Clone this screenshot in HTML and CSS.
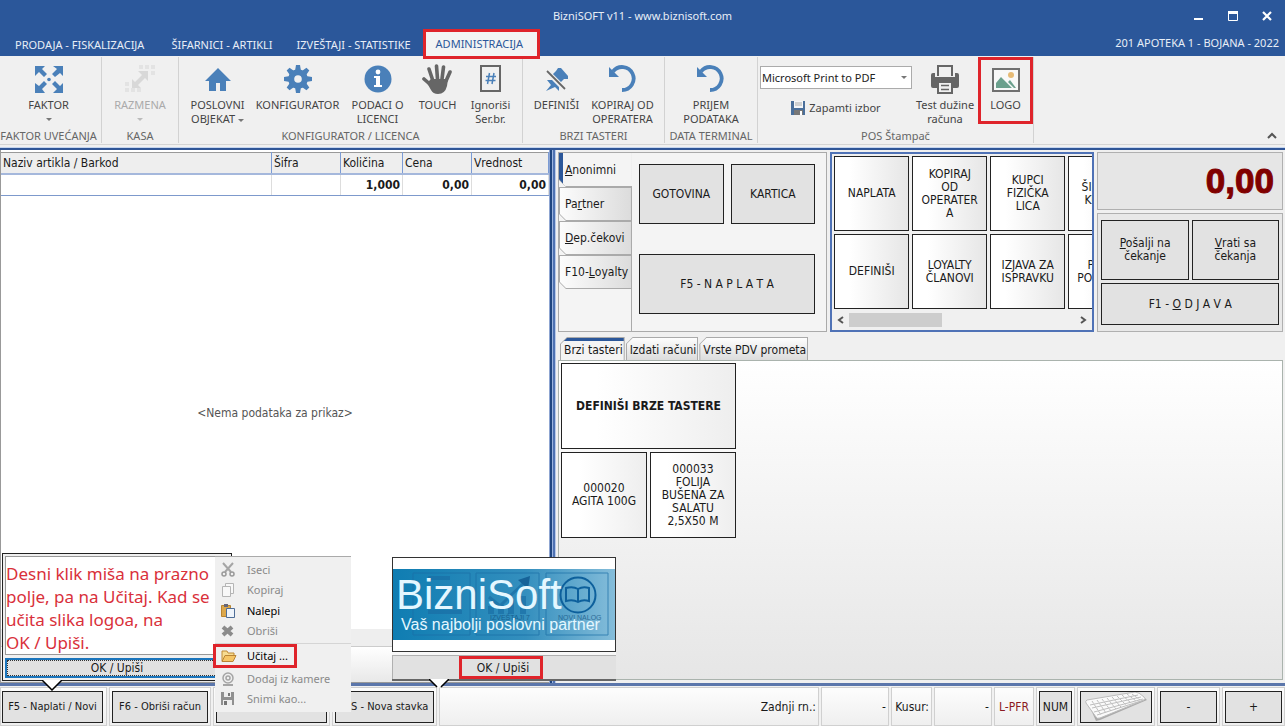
FILE: index.html
```html
<!DOCTYPE html>
<html lang="sr-Latn">
<head>
<meta charset="utf-8">
<title>BizniSOFT v11 - www.biznisoft.com</title>
<link rel="stylesheet" href="styles.css">
</head>
<body>
<svg class="defs" aria-hidden="true">
  <symbol id="undo" viewBox="0 0 28 28"><path d="M4 6.500A11.500 11.500 0 1 1 13 25" fill="none" stroke="#4a80b9" stroke-width="3.800"/><path d="M0 2v10h10z" fill="#4a80b9"/></symbol>
</svg>
<header class="titlebar">
  <div class="caption">
    <h1>BizniSOFT v11 - www.biznisoft.com</h1>
    <div class="winbtns">
      <button aria-label="Minimize"><svg width="10" height="10"><path d="M0 8h9" stroke="#fff" stroke-width="2"/></svg></button>
      <button aria-label="Maximize"><svg width="10" height="10"><path d="M.5 0v9.500h9V0" fill="none" stroke="#fff"/><path d="M0 1.500h10" stroke="#fff" stroke-width="3"/></svg></button>
      <button aria-label="Close"><svg width="10" height="10"><path d="M1 1l8 8M9 1l-8 8" stroke="#fff" stroke-width="2.200"/></svg></button>
    </div>
  </div>
  <nav class="menubar">
    <button>PRODAJA - FISKALIZACIJA</button>
    <button>ŠIFARNICI - ARTIKLI</button>
    <button>IZVEŠTAJI - STATISTIKE</button>
    <button class="current">ADMINISTRACIJA</button>
    <span class="user">201 APOTEKA 1 - BOJANA - 2022</span>
  </nav>
</header>

<section class="ribbon">
  <div class="group g-faktor">
    <div class="tools"><button class="tool"><svg width="28" height="28" viewBox="0 0 28 28"><g fill="#4a80b9"><path d="M0 1h10L7 4l5 5-3 3-5-5-4 4zM28 1v10l-3-3-5 4-3-3 5-5-4-3zM0 28V18l4 3 5-5 3 3-5 5 3 4zM28 28H18l4-4-5-5 3-3 5 5 3-3z"/><circle cx="14" cy="14.500" r="1.800"/></g></svg><span>FAKTOR</span><i class="caret"></i></button></div>
    <h2>FAKTOR UVEĆANJA</h2>
  </div>
  <div class="group g-kasa">
    <div class="tools"><button class="tool" disabled><svg width="30" height="28" viewBox="0 0 30 28"><g fill="#d8d8d8"><path d="M23 6v10l-3-3-7 7 3 3H7v-9l3 3 7-7-4-4z"/></g><g fill="#e3e3e3"><path d="M14 0h4v4h-4zM20 0h4v4h-4zM26 0h4v4h-4zM26 6h4v4h-4zM0 17h4v4H0zM0 23h4v4H0zM6 23h4v4H6zM12 23h4v4h-4z"/></g></svg><span>RAZMENA</span><i class="caret"></i></button></div>
    <h2>KASA</h2>
  </div>
  <div class="group g-konf">
    <div class="tools">
      <button class="tool w64"><svg width="28" height="28" viewBox="0 0 28 28"><path d="M14 3L1 16h4v10h7v-8h4v8h6V16h5z" fill="#4a80b9"/></svg><span>POSLOVNI<br>OBJEKAT <i class="caret inline"></i></span></button>
      <button class="tool w88"><svg width="28" height="28" viewBox="-14 -14 28 28"><g fill="#4a80b9"><path id="tooth" d="M-3-8l1-6h4l1 6z"/><use href="#tooth" transform="rotate(45)"/><use href="#tooth" transform="rotate(90)"/><use href="#tooth" transform="rotate(135)"/><use href="#tooth" transform="rotate(180)"/><use href="#tooth" transform="rotate(225)"/><use href="#tooth" transform="rotate(270)"/><use href="#tooth" transform="rotate(315)"/></g><circle r="6.800" fill="none" stroke="#4a80b9" stroke-width="6"/></svg><span>KONFIGURATOR</span></button>
      <button class="tool w64"><svg width="28" height="28" viewBox="0 0 28 28"><circle cx="14" cy="14" r="13.500" fill="#4a80b9"/><g fill="#fff"><circle cx="14" cy="7" r="2.400"/><path d="M10 11h6v9h2v2h-8v-2h2v-7h-2z"/></g></svg><span>PODACI O<br>LICENCI</span></button>
      <button class="tool w48"><svg width="32" height="30" viewBox="0 0 32 30"><g fill="none" stroke="#666" stroke-width="3.600" stroke-linecap="round"><path d="M11 17L7 5M15.500 15l-1-13M20 15l1.500-12M24 17l4-9M10 22l-8-7"/></g><path d="M9 15h17l-1 7q-2 8-9 8-5 0-7-4l-4-7z" fill="#666"/></svg><span>TOUCH</span></button>
      <button class="tool w48"><svg width="22" height="28" viewBox="0 0 22 28"><path d="M1 1h19v25H1z" fill="none" stroke="#666" stroke-width="2"/><path d="M9.500 8l-2 11M14 8l-2 11M6 11.500h10M5.500 15.500h10" stroke="#4a80b9" stroke-width="1.500"/></svg><span>Ignoriši<br>Ser.br.</span></button>
    </div>
    <h2>KONFIGURATOR / LICENCA</h2>
  </div>
  <div class="group g-brzi">
    <div class="tools">
      <button class="tool w64"><svg width="26" height="28" viewBox="0 0 26 28"><path d="M14 3l3 0 7 8 0 3-4 0-4 4-8-8 4-4z" fill="#4a80b9"/><path d="M3 15h5l7 7v4l-4-4-9 4 5-6z" fill="#4a80b9"/><path d="M3 6l18 18" stroke="#f0f0f0" stroke-width="4"/><path d="M3 6l18 18" stroke="#666" stroke-width="1.800"/></svg><span>DEFINIŠI</span></button>
      <button class="tool w64"><svg width="28" height="28"><use href="#undo"/></svg><span>KOPIRAJ OD<br>OPERATERA</span></button>
    </div>
    <h2>BRZI TASTERI</h2>
  </div>
  <div class="group g-data">
    <div class="tools"><button class="tool w64"><svg width="28" height="28"><use href="#undo"/></svg><span>PRIJEM<br>PODATAKA</span></button></div>
    <h2>DATA TERMINAL</h2>
  </div>
  <div class="group g-pos">
    <div class="tools">
      <div class="printer">
        <div class="combo">
          <select aria-label="Štampač"><option>Microsoft Print to PDF</option></select>
          <i class="caret"></i>
        </div>
        <button class="save"><svg width="14" height="14" viewBox="0 0 14 14"><path d="M0 0h14v14H0z" fill="#4a6f9b"/><path d="M3 0h9v7H3z" fill="#f4f6f8"/><path d="M4 2h7M4 4h7" stroke="#aaa"/><path d="M3 9h9v5H3z" fill="#777"/><path d="M9 10h2v4H9z" fill="#fff"/></svg>Zapamti izbor</button>
      </div>
      <button class="tool w64"><svg width="28" height="30" viewBox="0 0 28 30"><path d="M7 12V2h14v10" fill="none" stroke="#666" stroke-width="2"/><path d="M0 11q0-2 2-2h2v4h20V9h2q2 0 2 2v11q0 2-2 2H2q-2 0-2-2z" fill="#666"/><path d="M7 18h14v11H7z" fill="#f0f0f0" stroke="#666" stroke-width="2"/><path d="M10 21.500h8M10 25.500h8" stroke="#666" stroke-width="1.600"/></svg><span>Test dužine<br>računa</span></button>
      <button class="tool marked logo-tool"><svg width="28" height="28" viewBox="0 0 28 28"><path d="M1 4h26v22H1z" fill="#f8f8f8" stroke="#707070" stroke-width="2"/><circle cx="19" cy="10" r="3" fill="#e6ba75"/><path d="M4 23v-5l5-6 11 11zM16 17l2-2 6 8h-2z" fill="#6ba08d"/></svg><span>LOGO</span></button>
    </div>
    <h2>POS Štampač</h2>
  </div>
  <button class="collapse" aria-label="Collapse"><svg width="10" height="8"><path d="M1 6l4-4 4 4" fill="none" stroke="#555" stroke-width="2"/></svg></button>
</section>

<main class="work">
  <section class="receipt">
    <table class="items">
      <colgroup><col><col class="c-sifra"><col class="c-kol"><col class="c-cena"><col class="c-vred"></colgroup>
      <thead><tr><th>Naziv artikla / Barkod</th><th>Šifra</th><th>Količina</th><th>Cena</th><th>Vrednost</th></tr></thead>
      <tbody><tr><td></td><td></td><td>1,000</td><td>0,00</td><td>0,00</td></tr></tbody>
    </table>
    <p class="empty">&lt;Nema podataka za prikaz&gt;</p>
    <div class="band"></div>
    <div class="subband"></div>
  </section>
  <div class="splitter"></div>
  <section class="side">
    <div class="upper">
      <div class="pay">
        <div class="vtabs">
          <button class="vtab on"><span><u>A</u>nonimni</span></button>
          <button class="vtab"><span>Pa<u>r</u>tner</span></button>
          <button class="vtab"><span><u>D</u>ep.čekovi</span></button>
          <button class="vtab"><span>F10-<u>L</u>oyalty</span></button>
        </div>
        <div class="paybtns">
          <button class="key">GOTOVINA</button>
          <button class="key">KARTICA</button>
          <button class="key wide">F5 - N A P L A T A</button>
        </div>
      </div>
      <div class="shortcuts">
        <div class="tiles">
          <button class="tile">NAPLATA</button><button class="tile">KOPIRAJ<br>OD<br>OPERATER<br>A</button><button class="tile">KUPCI<br>FIZIČKA<br>LICA</button><button class="tile">ŠIFARNIK<br>KUPACA</button>
          <button class="tile">DEFINIŠI</button><button class="tile">LOYALTY<br>ČLANOVI</button><button class="tile">IZJAVA ZA<br>ISPRAVKU</button><button class="tile">PRIJEM<br>PODATAKA</button>
        </div>
        <div class="scroll">
          <svg width="8" height="8"><path d="M6 1L2 4l4 3" fill="none" stroke="#555" stroke-width="2"/></svg>
          <div class="track"><div class="thumb"></div></div>
          <svg width="8" height="8"><path d="M2 1l4 3-4 3" fill="none" stroke="#555" stroke-width="2"/></svg>
        </div>
      </div>
      <div class="totals">
        <output class="total">0,00</output>
        <div class="session">
          <button class="key"><span><u>P</u>ošalji na<br>čekanje</span></button>
          <button class="key"><span><u>V</u>rati sa<br>čekanja</span></button>
          <button class="key wide"><span>F1 - <u>O</u> D J A V A</span></button>
        </div>
      </div>
    </div>
    <div class="htabs">
      <button class="htab on">Brzi tasteri</button>
      <button class="htab">Izdati računi</button>
      <button class="htab">Vrste PDV prometa</button>
    </div>
    <div class="quick">
      <div class="quickgrid">
        <button class="tile wide">DEFINIŠI BRZE TASTERE</button>
        <button class="tile">000020<br>AGITA 100G</button>
        <button class="tile">000033<br>FOLIJA<br>BUŠENA ZA<br>SALATU<br>2,5X50 M</button>
      </div>
    </div>
  </section>
</main>

<footer class="status">
  <div class="cell b1"><button class="key">F5 - Naplati / Novi</button></div>
  <div class="cell b2"><button class="key">F6 - Obriši račun</button></div>
  <div class="cell b3"><button class="key"></button></div>
  <div class="cell b4"><button class="key">INS - Nova stavka</button></div>
  <div class="cell grow">Zadnji rn.:</div>
  <div class="cell v1">-</div>
  <div class="cell k1">Kusur:</div>
  <div class="cell v2">-</div>
  <div class="cell pfr">L-PFR</div>
  <div class="cell num"><button class="key">NUM</button></div>
  <div class="cell kbd"><button class="key" aria-label="Tastatura"><svg width="62" height="29" viewBox="0 0 62 29"><path d="M3 11L54 1l8 7-47 20-4 1z" fill="#aaa"/><path d="M2 8L50 0q4 0 9 5 2 2 0 3L15 26q-3 1-4-1L1 11q-1-2 1-3z" fill="#fafafa" stroke="#bbb"/><g stroke="#bdbdbd" fill="none"><path d="M5 13L53 3M7 16L56 5M9 20L58 7M12 23L59 8"/><path d="M7 9l9 14M12 8l9 13M17 7l9 12M22 6l9 11M27 5l9 10M32 4l9 9M37 3l9 8M42 2l9 7M47 2l8 6" stroke-dasharray="3 1"/></g></svg></button></div>
  <div class="cell pm"><button class="key">-</button></div>
  <div class="cell pm"><button class="key">+</button></div>
</footer>

<aside class="popup note">
  <p class="hint">Desni klik miša na prazno<br>polje, pa na Učitaj. Kad se<br>učita slika logoa, na<br>OK / Upiši.</p>
  <button class="ok focus">OK / Upiši</button>
  <svg class="pointer" width="20" height="11"><path d="M0 0h20L10 10z" fill="#fff"/><path d="M0 0l10 10L20 0" fill="none" stroke="#000" stroke-width="1.500"/></svg>
</aside>

<aside class="popup preview">
  <div class="frame">
    <svg class="brand" viewBox="0 0 222 71" preserveAspectRatio="none" role="img" aria-label="BizniSoft">
      <defs><linearGradient id="sea"><stop offset="0" stop-color="#0f7db2"/><stop offset=".6" stop-color="#348fbe"/><stop offset="1" stop-color="#85bdda"/></linearGradient></defs>
      <path d="M0 0h222v71H0z" fill="url(#sea)"/>
      <g fill="none" stroke="#1a6fa6" opacity=".7"><path d="M20 4h57v62H20zM83 4h63v62H83zM153 4h62v62h-62z"/><path d="M35 9h22M35 43h34" stroke-width="4"/><path d="M96 28l11 9 10-10 15-14" stroke-width="3"/><path d="M98 45v-8M108 45v-9M118 45V31M130 45V27" stroke-width="6"/></g>
      <path d="M125 11l12-4-2 13z" fill="#166399"/>
      <g fill="none" stroke="#0d609c" stroke-width="2"><circle cx="185" cy="26" r="17.500"/><path d="M173 19q7-2 12 1 5-3 11-1v13q-6-2-11 1-5-3-12-1zM185 20v13"/></g>
      <g class="ghost"><text x="97" y="51">IZVEŠTAJI 7</text><text x="165" y="51">NOVI NALOG</text></g>
      <text class="name" x="3" y="40">BizniSoft</text>
      <text class="motto" x="8" y="61">Vaš najbolji poslovni partner</text>
    </svg>
  </div>
  <div class="okrow"><button class="ok marked">OK / Upiši</button></div>
  <svg class="pointer" width="20" height="9"><path d="M0 0h20L10 9z" fill="#fff"/><path d="M0 0l8 8M20 0l-8 8" fill="none" stroke="#000" stroke-width="1.500"/></svg>
</aside>

<div class="ctx">
  <button disabled><svg width="14" height="14"><path d="M2 0l8 9M12 0L4 9" stroke="#a5a5a5" stroke-width="2"/><circle cx="3" cy="11" r="2" fill="none" stroke="#999" stroke-width="1.500"/><circle cx="11" cy="11" r="2" fill="none" stroke="#999" stroke-width="1.500"/></svg>Iseci</button>
  <button disabled><svg width="14" height="14"><path d="M4.500.5h8v10h-8z" fill="#f8f8f8" stroke="#b5b5b5"/><path d="M1.500 3.500h8v10h-8z" fill="#f8f8f8" stroke="#b5b5b5"/></svg>Kopiraj</button>
  <button><svg width="14" height="14"><path d="M.5 1.500h9v11h-9z" fill="#dca84c" stroke="#b98532"/><path d="M3 0h4v3H3z" fill="#667"/><path d="M5.500 4.500h8v9h-8z" fill="#eef4fb" stroke="#4e6d97"/></svg>Nalepi</button>
  <button disabled><svg width="14" height="14"><path d="M2 3l9 8M11 3l-9 8" stroke="#8b8b8b" stroke-width="4"/></svg>Obriši</button>
  <hr>
  <button class="load marked"><svg width="16" height="14"><path d="M1 12V2h5l1 2h6v3" fill="#f7dc91" stroke="#c08a34"/><path d="M1 12.500l3-6h11l-3 6z" fill="#f5c565" stroke="#b98434"/></svg>Učitaj ...</button>
  <button disabled><svg width="14" height="14"><circle cx="7" cy="6" r="5" fill="none" stroke="#a5a5a5" stroke-width="1.500"/><circle cx="7" cy="6" r="2" fill="none" stroke="#a5a5a5" stroke-width="1.500"/><path d="M2 13h10" stroke="#a5a5a5" stroke-width="2"/></svg>Dodaj iz kamere</button>
  <button disabled><svg width="14" height="14"><path d="M0 0h13v13H0z" fill="#909090"/><path d="M3 0h7v5H3zM2 8h9v5H2z" fill="#eee"/><path d="M7 1h2v3H7zM3 9h3v4H3z" fill="#777"/></svg>Snimi kao...</button>
</div>
</body>
</html>
```
FILE: styles.css
```css
* { box-sizing: border-box; }
body {
  margin: 0; height: 100vh; min-height: 600px; position: relative; overflow: hidden;
  display: flex; flex-direction: column;
  font: 12px/14px "DejaVu Sans Condensed", "Noto Sans", sans-serif;
  color: #1a1a1a; background: #f0f0f0;
}
button { font: inherit; color: inherit; background: none; border: 0; padding: 0; margin: 0; }
h1, h2, p { margin: 0; font: inherit; }
svg { display: block; flex: none; }
.defs { position: absolute; width: 0; height: 0; }

.titlebar { background: #2b579a; color: #e8eef7; font-family: "Noto Sans", sans-serif; font-size: 11px; }
.caption { height: 31px; display: grid; grid-template-columns: 1fr auto 1fr; align-items: center; }
.caption h1 { grid-column: 2; }
.winbtns { justify-self: end; display: flex; gap: 24px; padding-right: 13px; }
.menubar { height: 25px; display: flex; align-items: flex-end; }
.menubar button { height: 23px; padding: 0 12px; white-space: nowrap; }
.menubar button:first-child { padding: 0 15px; }
.menubar .current { height: 30px; background: #f3f3f3; color: #2b579a; border: 3px solid #df242b; padding: 0 14px 0 10px; margin-bottom: -3px; z-index: 2; }
.user { margin-left: auto; padding: 0 6px 6px 0; }

.ribbon {
  height: 94px; display: flex; padding-top: 1px; color: #444;
  font-family: "Noto Sans", sans-serif; font-size: 11px;
  border-bottom: 2px solid #2f5597; box-shadow: inset 0 -1px #c5d5ee, inset 0 -3px #f0f0f0, inset 0 -4px #d4d4d4;
}
.group { flex: none; height: 86px; display: flex; flex-direction: column; border-right: 1px solid #d2d2d2; }
.group h2 { text-align: center; color: #666; white-space: nowrap; }
.tools { flex: 1; display: flex; justify-content: center; gap: 4px; }
.g-faktor { width: 102px; padding-right: 4px; }
.g-kasa { width: 77px; }
.g-konf { width: 344px; }
.g-konf .tools { gap: 5px; }
.g-brzi { width: 142px; }
.g-brzi .tools { padding-right: 8px; }
.g-data { width: 93px; }
.g-pos { width: 276px; }
.tool { flex: none; display: flex; flex-direction: column; align-items: center; padding-top: 7px; white-space: nowrap; }
.tool svg { height: 30px; margin-bottom: 4px; }
.tool:disabled { color: #aaa; }
.caret { width: 0; height: 0; border: 3px solid transparent; border-top-color: #777; border-bottom: 0; margin-top: 6px; }
.tool:disabled .caret { border-top-color: #bbb; }
.caret.inline { display: inline-block; vertical-align: middle; margin: 0; }
.w64 { width: 62px; }
.w88 { width: 88px; }
.w48 { width: 48px; }
.printer { display: flex; flex-direction: column; align-items: center; gap: 12px; padding-top: 9px; }
.g-pos .tools { justify-content: flex-end; gap: 2px; }
.combo { display: flex; align-items: center; width: 152px; height: 23px; border: 1px solid #ababab; background: #fff; padding-right: 4px; }
.combo select { flex: 1; border: 0; color: #222; padding: 0 1px; font: inherit; appearance: none; background: none; }
.combo .caret { margin: 0; }
.save { display: flex; gap: 4px; align-items: center; }
.marked { border: 3px solid #df242b; }
.logo-tool { width: 55px; height: 67px; padding-top: 4px; color: #444; }
.collapse { margin-left: auto; align-self: flex-end; padding: 0 8px 8px; }

.work { flex: 1; min-height: 0; display: grid; grid-template-columns: minmax(0, 43fr) 6px minmax(0, 57fr); }
.receipt { display: flex; flex-direction: column; min-height: 0; background: #fff; border-left: 1px solid #999; padding-top: 2px; border-right: 1px solid #8fa6d2; }
.items { width: 100%; table-layout: fixed; border-collapse: collapse; }
.c-sifra { width: 69px; }
.c-kol { width: 62px; }
.c-cena { width: 69px; }
.c-vred { width: 77px; }
.items th { height: 21px; padding: 0 2px; background: #eee; border-top: 1px solid #999; border-bottom: 2px solid #a5b8dc; border-right: 1px solid #7b9bd4; text-align: left; font-weight: normal; }
.items td { height: 22px; padding: 0 2px; border-right: 1px solid #ddd; border-bottom: 1px solid #7d99cc; text-align: right; font-weight: bold; }
.empty { flex: 1; display: flex; align-items: center; justify-content: center; color: #555; }
.band { height: 18px; background: #eee; border-bottom: 1px solid #ccc; }
.subband { height: 36px; background: linear-gradient(#fff, #e8e8e8); border-bottom: 1px solid #999; }
.splitter { background: linear-gradient(90deg, #1f4580 0 2px, #9db5df 2px 3px, #4e72b3 3px 5px, #b8c9e8 5px); }

.side { display: flex; flex-direction: column; min-width: 0; padding: 2px 2px 3px; }
.upper { height: 178px; display: grid; grid-template-columns: minmax(0, 270fr) minmax(0, 265fr) minmax(0, 186fr); gap: 3px; }
.pay { display: flex; border: 1px solid #aaa; background: #f4f4f4; }
.vtabs { width: 73px; border-right: 1px solid #aaa; }
.vtab { width: 100%; height: 34px; display: block; text-align: left; padding: 1px 0 1px 1px; background: #aaa; clip-path: polygon(0 0, 100% 0, 100% 100%, 7px 100%, 0 27px); }
.vtab span { display: flex; align-items: center; height: 32px; padding-left: 5px; white-space: pre; background: linear-gradient(90deg, #fcfcfc, #dcdcdc); clip-path: polygon(0 0, 100% 0, 100% 100%, 6px 100%, 0 26px); }
.vtab.on { padding: 0 0 1px; width: calc(100% + 1px); position: relative; }
.vtab.on span { height: 33px; background: linear-gradient(90deg, #2b579a 4px, #f4f4f4 4px); padding-left: 6px; }
.paybtns { flex: 1; display: grid; grid-template-columns: 1fr 1fr; grid-template-rows: 60px 60px; gap: 30px 7px; padding: 11px 11px 0 7px; }
.key { border: 1px solid #222; background: #e2e2e2; }
.wide { grid-column: 1 / -1; }
.shortcuts { display: flex; flex-direction: column; border: 2px solid #4f72b6; padding: 2px 0 0 2px; overflow: hidden; }
.tiles { display: grid; grid-template-columns: repeat(4, 75px); grid-template-rows: 75px 75px; gap: 3px; overflow: hidden; }
.tile { border: 1px solid #222; background: linear-gradient(90deg, #fff 20%, #e6e6e6); line-height: 13px; white-space: nowrap; }
.scroll { margin-top: auto; height: 18px; display: flex; align-items: center; gap: 4px; padding: 0 5px 2px 3px; }
.track { flex: 1; height: 14px; }
.thumb { width: 41%; height: 100%; background: #cdcdcd; }
.totals { display: flex; flex-direction: column; gap: 3px; }
.total {
  height: 58px; display: flex; align-items: center; justify-content: flex-end; padding-right: 8px;
  border: 1px solid #b0b0b0; background: #e6e6e6; color: #800000;
  font: bold 35px/40px Impact, "Liberation Sans", sans-serif; -webkit-text-stroke: 1px #800000;
}
.session { flex: 1; display: grid; grid-template-columns: 1fr 1fr; grid-template-rows: 60px 42px; gap: 3px; padding: 6px 3px; border: 1px solid #b0b0b0; background: #e8e8e8; line-height: 13px; }
.htabs { display: flex; gap: 1px; padding: 7px 0 0 2px; height: 30px; }
.htab { position: relative; isolation: isolate; background: #aaa; padding: 2px 2px 0 4px; clip-path: polygon(7px 0, 100% 0, 100% 100%, 0 100%, 0 7px); white-space: nowrap; }
.htab::before { content: ""; position: absolute; z-index: -1; inset: 1px 1px 0; background: linear-gradient(#fdfdfd, #dcdcdc); clip-path: polygon(6px 0, 100% 0, 100% 100%, 0 100%, 0 6px); }
.htab.on::before { background: linear-gradient(#2b579a 3px, #f4f4f4 3px); }
.quick { flex: 1; border: 1px solid #aab3ad; background: linear-gradient(#fff, #e6e6e6); padding: 2px; }
.quickgrid { display: inline-grid; grid-template-columns: 86px 86px; grid-template-rows: 86px 86px; gap: 3px; }
.quick .tile { background: linear-gradient(90deg, #fff 20%, #eee); }
.quick .tile.wide { font-weight: bold; }

.status { flex: none; height: 43px; display: flex; gap: 2px; border-top: 3px solid #5b76ab; padding-top: 1px; background: #f1f1f1; }
.cell { flex: none; border: 1px solid #d0d0d0; background: linear-gradient(#fdfdfd, #efefef); display: flex; align-items: center; justify-content: flex-end; padding: 0 2px; white-space: nowrap; }
.cell .key { flex: 1; min-width: 0; height: 32px; display: flex; align-items: center; justify-content: center; white-space: nowrap; }
.b1 .key, .b2 .key, .b4 .key { font-size: 11px; }
.b1 { width: 107px; padding-right: 3px; padding-left: 1px; }
.b2 { width: 102px; }
.b3 { width: 117px; }
.b4 { width: 105px; }
.grow { flex: 1; }
.v1 { width: 68px; }
.k1 { width: 41px; }
.v2 { width: 58px; }
.pfr { width: 40px; color: #8b1a22; justify-content: center; }
.num { width: 39px; }
.kbd { width: 78px; }
.pm { width: 63px; }

.popup { position: absolute; bottom: 45px; display: flex; flex-direction: column; }
.pointer { position: absolute; top: 100%; }
.note { left: 2px; width: 230px; height: 128px; border: 1px solid #222; background: #f0f0f0; padding: 2px; gap: 3px; z-index: 3; }
.note .pointer { left: 39px; }
.hint { flex: 1; background: #fff; border: 1px solid #999; padding: 5px 0 0; color: #d9303a; font: 17px/23px "Noto Sans", sans-serif; white-space: nowrap; }
.ok { height: 23px; background: #e1e1e1; }
.ok.focus { border: 2px solid #1b75bc; outline: 1px dotted #333; outline-offset: -3px; }
.preview { left: 392px; width: 224px; height: 124px; background: #f7f7f7; border-bottom: 2px solid #666; gap: 3px; z-index: 3; }
.preview .pointer { left: 37px; }
.frame { flex: 1; display: flex; align-items: center; border: 1px solid #333; background: #fff; }
.brand { width: 100%; height: 71px; }
.brand .name { font: 42px "Liberation Sans", sans-serif; fill: #e4f7ff; }
.brand .motto { font: 16px "Liberation Sans", sans-serif; fill: #e4f7ff; }
.ghost { font: 7px "Liberation Sans", sans-serif; fill: #0e4f80; opacity: .7; }
.okrow { display: flex; justify-content: center; background: #e1e1e1; border: solid #b0b0b0; border-width: 1px 0 0 1px; padding-right: 8px; }
.ok.marked { width: 84px; padding-left: 5px; }
.ctx { position: absolute; left: 215px; bottom: 14px; width: 136px; height: 156px; padding: 3px 0; background: #f0f0f0; border-top: 1px solid #aaa; z-index: 4; display: flex; flex-direction: column; font: 11px/14px "Noto Sans", sans-serif; }
.ctx button { height: 21px; display: flex; align-items: center; gap: 12px; padding-left: 6px; white-space: nowrap; color: #000; }
.ctx button svg { width: 14px; overflow: visible; }
.ctx button:disabled { color: #8a8a8a; }
.ctx hr { width: 100%; margin: 2px 0 0; border: 0; border-top: 1px solid #d5d5d5; }
.ctx .load { height: 25px; width: 84px; margin-left: -2px; padding-left: 5px; }
```
